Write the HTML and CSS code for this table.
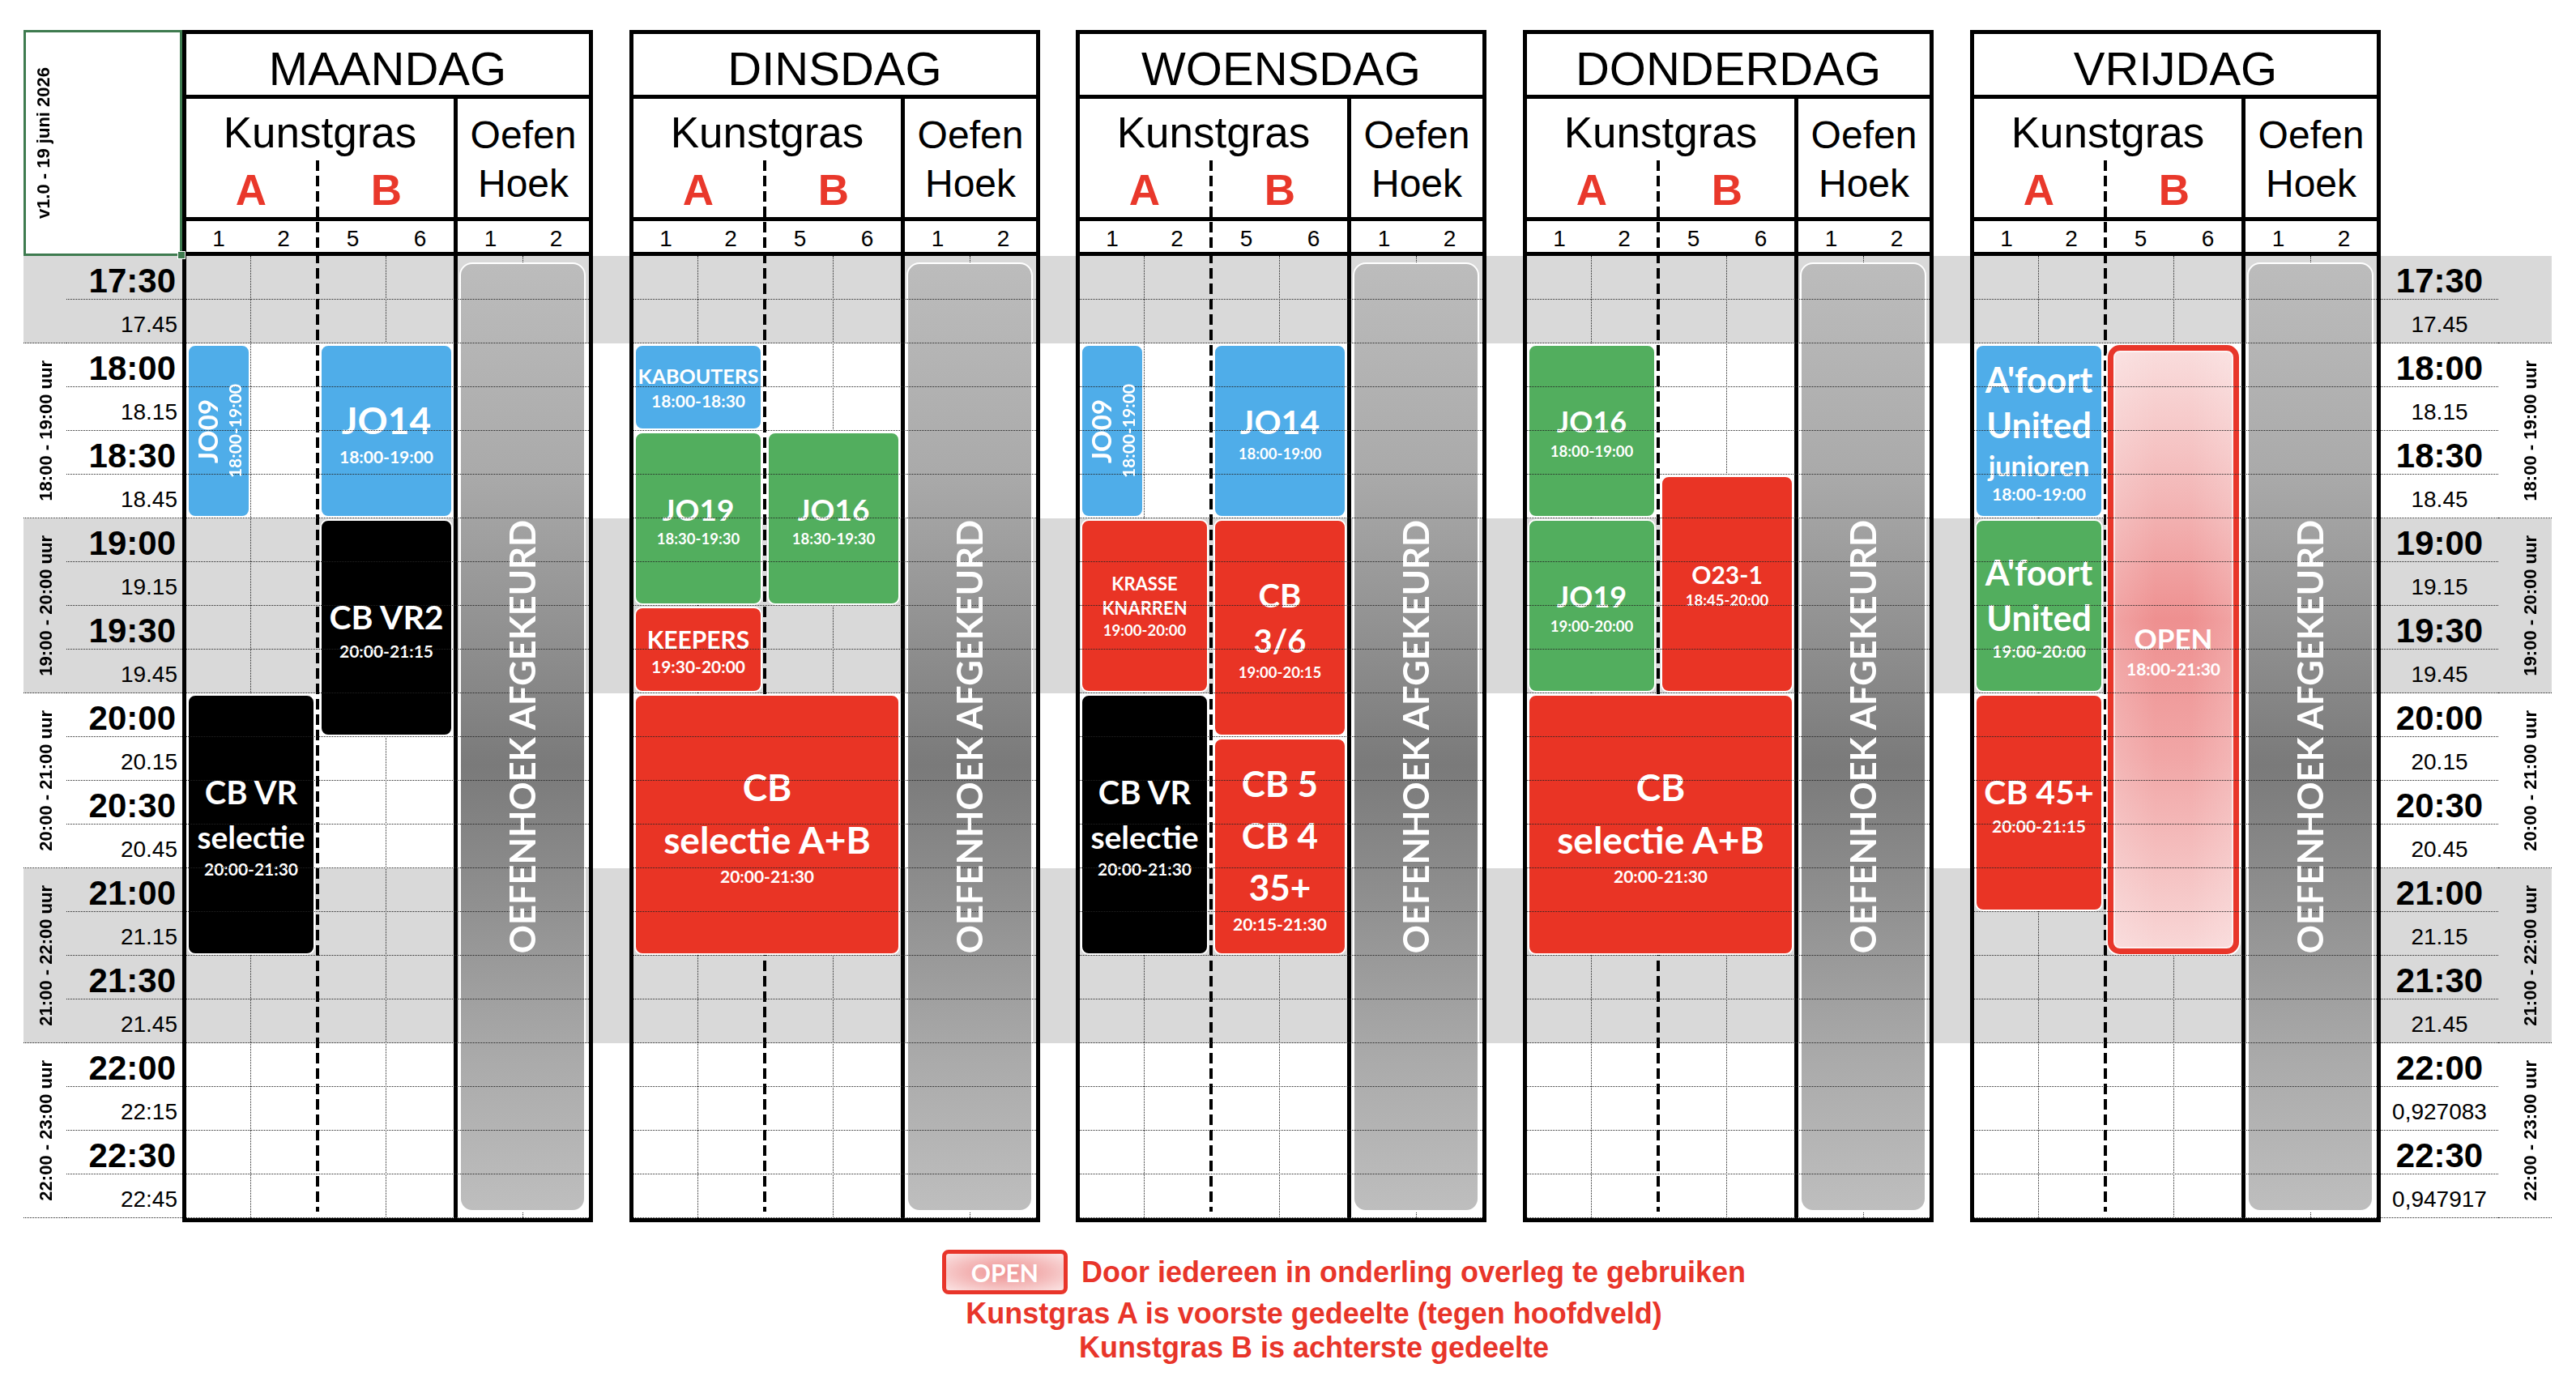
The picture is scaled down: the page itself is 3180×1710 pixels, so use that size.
FILE: index.html
```html
<!DOCTYPE html>
<html lang="nl">
<head>
<meta charset="utf-8">
<title>Trainingsschema</title>
<link rel="stylesheet" href="styles.css">
</head>
<body>
<div class="sheet">
  <div class="band band-a"></div>
  <div class="band band-b"></div>
  <div class="band band-c"></div>

  <div class="version"><div class="vt">v1.0 - 19 juni 2026</div><span class="handle"></span></div>

  <div class="tcol tcol-l">
    <div class="groups">
      <div class="grp half"></div>
      <div class="grp"><div class="vt">18:00 - 19:00 uur</div></div>
      <div class="grp"><div class="vt">19:00 - 20:00 uur</div></div>
      <div class="grp"><div class="vt">20:00 - 21:00 uur</div></div>
      <div class="grp"><div class="vt">21:00 - 22:00 uur</div></div>
      <div class="grp"><div class="vt">22:00 - 23:00 uur</div></div>
    </div>
    <div class="labels">
      <div class="tl big">17:30</div><div class="tl">17.45</div>
      <div class="tl big">18:00</div><div class="tl">18.15</div>
      <div class="tl big">18:30</div><div class="tl">18.45</div>
      <div class="tl big">19:00</div><div class="tl">19.15</div>
      <div class="tl big">19:30</div><div class="tl">19.45</div>
      <div class="tl big">20:00</div><div class="tl">20.15</div>
      <div class="tl big">20:30</div><div class="tl">20.45</div>
      <div class="tl big">21:00</div><div class="tl">21.15</div>
      <div class="tl big">21:30</div><div class="tl">21.45</div>
      <div class="tl big">22:00</div><div class="tl">22:15</div>
      <div class="tl big">22:30</div><div class="tl">22:45</div>
    </div>
  </div>

  <!-- MAANDAG -->
  <div class="day d1">
    <div class="dname">MAANDAG</div>
    <div class="bar bar1"></div>
    <div class="kg"><div class="kg-t">Kunstgras</div><div class="ab"><span class="a">A</span><span class="b">B</span></div></div>
    <div class="oh">Oefen<br>Hoek</div>
    <div class="bar bar2"></div>
    <div class="num n1">1</div><div class="num n2">2</div><div class="num n5">5</div><div class="num n6">6</div><div class="num n7">1</div><div class="num n8">2</div>
    <div class="bar bar3"></div>
    <div class="hl"></div>
    <div class="vl vl1"></div><div class="vl vl2"></div><div class="vl vl3"></div>
    <div class="vdiv"></div>
    <div class="dash"></div>
    <div class="tile"><div class="vt">OEFENHOEK AFGEKEURD</div></div>
    <div class="s blue c1 t18-19 rot"><div class="vt"><div class="f33">JO09</div><div class="tm">18:00-19:00</div></div></div>
    <div class="s blue cB t18-19"><div class="f46">JO14</div><div class="tm">18:00-19:00</div></div>
    <div class="s black cB t19-2015"><div class="f41">CB VR2</div><div class="tm">20:00-21:15</div></div>
    <div class="s black cA t20-2130"><div class="f40">CB VR</div><div class="f39">selectie</div><div class="tm">20:00-21:30</div></div>
  </div>

  <!-- DINSDAG -->
  <div class="day d2">
    <div class="dname">DINSDAG</div>
    <div class="bar bar1"></div>
    <div class="kg"><div class="kg-t">Kunstgras</div><div class="ab"><span class="a">A</span><span class="b">B</span></div></div>
    <div class="oh">Oefen<br>Hoek</div>
    <div class="bar bar2"></div>
    <div class="num n1">1</div><div class="num n2">2</div><div class="num n5">5</div><div class="num n6">6</div><div class="num n7">1</div><div class="num n8">2</div>
    <div class="bar bar3"></div>
    <div class="hl"></div>
    <div class="vl vl1"></div><div class="vl vl2"></div><div class="vl vl3"></div>
    <div class="vdiv"></div>
    <div class="dash"></div>
    <div class="tile"><div class="vt">OEFENHOEK AFGEKEURD</div></div>
    <div class="s blue cA t18-1830"><div class="f25">KABOUTERS</div><div class="tm">18:00-18:30</div></div>
    <div class="s green cA t1830-1930"><div class="f37">JO19</div><div class="tms">18:30-19:30</div></div>
    <div class="s green cB t1830-1930"><div class="f37">JO16</div><div class="tms">18:30-19:30</div></div>
    <div class="s red cA t1930-20"><div class="f30">KEEPERS</div><div class="tm">19:30-20:00</div></div>
    <div class="s red cAB t20-2130"><div class="f46">CB</div><div class="f46">selectie A+B</div><div class="tm">20:00-21:30</div></div>
  </div>

  <!-- WOENSDAG -->
  <div class="day d3">
    <div class="dname">WOENSDAG</div>
    <div class="bar bar1"></div>
    <div class="kg"><div class="kg-t">Kunstgras</div><div class="ab"><span class="a">A</span><span class="b">B</span></div></div>
    <div class="oh">Oefen<br>Hoek</div>
    <div class="bar bar2"></div>
    <div class="num n1">1</div><div class="num n2">2</div><div class="num n5">5</div><div class="num n6">6</div><div class="num n7">1</div><div class="num n8">2</div>
    <div class="bar bar3"></div>
    <div class="hl"></div>
    <div class="vl vl1"></div><div class="vl vl2"></div><div class="vl vl3"></div>
    <div class="vdiv"></div>
    <div class="dash"></div>
    <div class="tile"><div class="vt">OEFENHOEK AFGEKEURD</div></div>
    <div class="s blue c1 t18-19 rot"><div class="vt"><div class="f33">JO09</div><div class="tm">18:00-19:00</div></div></div>
    <div class="s blue cB t18-19"><div class="f41">JO14</div><div class="tms">18:00-19:00</div></div>
    <div class="s red cA t19-20"><div class="f22">KRASSE</div><div class="f22">KNARREN</div><div class="tms">19:00-20:00</div></div>
    <div class="s red cB t19-2015"><div class="f40">CB</div><div class="f40">3/6</div><div class="tms">19:00-20:15</div></div>
    <div class="s black cA t20-2130"><div class="f40">CB VR</div><div class="f39">selectie</div><div class="tm">20:00-21:30</div></div>
    <div class="s red cB t2015-2130"><div class="f44">CB 5</div><div class="f44">CB 4</div><div class="f44">35+</div><div class="tm">20:15-21:30</div></div>
  </div>

  <!-- DONDERDAG -->
  <div class="day d4">
    <div class="dname">DONDERDAG</div>
    <div class="bar bar1"></div>
    <div class="kg"><div class="kg-t">Kunstgras</div><div class="ab"><span class="a">A</span><span class="b">B</span></div></div>
    <div class="oh">Oefen<br>Hoek</div>
    <div class="bar bar2"></div>
    <div class="num n1">1</div><div class="num n2">2</div><div class="num n5">5</div><div class="num n6">6</div><div class="num n7">1</div><div class="num n8">2</div>
    <div class="bar bar3"></div>
    <div class="hl"></div>
    <div class="vl vl1"></div><div class="vl vl2"></div><div class="vl vl3"></div>
    <div class="vdiv"></div>
    <div class="dash"></div>
    <div class="tile"><div class="vt">OEFENHOEK AFGEKEURD</div></div>
    <div class="s green cA t18-19"><div class="f36">JO16</div><div class="tms">18:00-19:00</div></div>
    <div class="s green cA t19-20"><div class="f36">JO19</div><div class="tms">19:00-20:00</div></div>
    <div class="s red cB t1845-20"><div class="f30">O23-1</div><div class="tms">18:45-20:00</div></div>
    <div class="s red cAB t20-2130"><div class="f46">CB</div><div class="f46">selectie A+B</div><div class="tm">20:00-21:30</div></div>
  </div>

  <!-- VRIJDAG -->
  <div class="day d5">
    <div class="dname">VRIJDAG</div>
    <div class="bar bar1"></div>
    <div class="kg"><div class="kg-t">Kunstgras</div><div class="ab"><span class="a">A</span><span class="b">B</span></div></div>
    <div class="oh">Oefen<br>Hoek</div>
    <div class="bar bar2"></div>
    <div class="num n1">1</div><div class="num n2">2</div><div class="num n5">5</div><div class="num n6">6</div><div class="num n7">1</div><div class="num n8">2</div>
    <div class="bar bar3"></div>
    <div class="hl"></div>
    <div class="vl vl1"></div><div class="vl vl2"></div><div class="vl vl3"></div>
    <div class="vdiv"></div>
    <div class="dash"></div>
    <div class="tile"><div class="vt">OEFENHOEK AFGEKEURD</div></div>
    <div class="s blue cA t18-19 tight"><div class="f43">A'foort</div><div class="f43">United</div><div class="f34">junioren</div><div class="tm">18:00-19:00</div></div>
    <div class="s green cA t19-20 tight"><div class="f43">A'foort</div><div class="f43">United</div><div class="tm">19:00-20:00</div></div>
    <div class="s red cA t20-2115"><div class="f41">CB 45+</div><div class="tm">20:00-21:15</div></div>
    <div class="s open cB t18-2130"><div class="f35">OPEN</div><div class="tm">18:00-21:30</div></div>
  </div>

  <div class="tcol tcol-r">
    <div class="labels">
      <div class="tl big">17:30</div><div class="tl">17.45</div>
      <div class="tl big">18:00</div><div class="tl">18.15</div>
      <div class="tl big">18:30</div><div class="tl">18.45</div>
      <div class="tl big">19:00</div><div class="tl">19.15</div>
      <div class="tl big">19:30</div><div class="tl">19.45</div>
      <div class="tl big">20:00</div><div class="tl">20.15</div>
      <div class="tl big">20:30</div><div class="tl">20.45</div>
      <div class="tl big">21:00</div><div class="tl">21.15</div>
      <div class="tl big">21:30</div><div class="tl">21.45</div>
      <div class="tl big">22:00</div><div class="tl">0,927083</div>
      <div class="tl big">22:30</div><div class="tl">0,947917</div>
    </div>
    <div class="groups">
      <div class="grp half"></div>
      <div class="grp"><div class="vt">18:00 - 19:00 uur</div></div>
      <div class="grp"><div class="vt">19:00 - 20:00 uur</div></div>
      <div class="grp"><div class="vt">20:00 - 21:00 uur</div></div>
      <div class="grp"><div class="vt">21:00 - 22:00 uur</div></div>
      <div class="grp"><div class="vt">22:00 - 23:00 uur</div></div>
    </div>
  </div>
</div>

<div class="legend">
  <div class="leg1"><div class="openbox">OPEN</div><div>Door iedereen in onderling overleg te gebruiken</div></div>
  <div>Kunstgras A is voorste gedeelte (tegen hoofdveld)</div>
  <div>Kunstgras B is achterste gedeelte</div>
</div>
</body>
</html>
```

FILE: styles.css
```css
* { box-sizing: border-box; }
html, body { margin: 0; background: #fff; }
body {
  width: 3180px;
  height: 1710px;
  overflow: hidden;
  font-family: "Liberation Sans", Arial, sans-serif;
  color: #000;
}

.sheet {
  display: grid;
  padding: 37px 0 0 29px;
  grid-template-columns: 53px 143px 507px 45px 507px 44px 507px 45px 507px 45px 507px 145px 66px;
  grid-template-rows: 279px repeat(22, 54px) 5px;
}

.band { grid-column: 1 / -1; background: #d9d9d9; }
.band-a { grid-row: 2 / 4; }
.band-b { grid-row: 8 / 12; }
.band-c { grid-row: 16 / 20; }

.vt {
  writing-mode: vertical-rl;
  transform: rotate(180deg);
  white-space: nowrap;
}

/* version box */
.version {
  grid-column: 1 / 3;
  grid-row: 1;
  border: 3px solid #3e7b4f;
  background: #fff;
  position: relative;
  z-index: 2;
  display: flex;
  align-items: center;
  padding-left: 9px;
}
.version .vt { font-weight: 700; font-size: 22px; line-height: 26px; }
.handle {
  position: absolute;
  right: -7px;
  bottom: -7px;
  width: 10px;
  height: 10px;
  background: #3e7b4f;
  border: 1px solid #fff;
}

/* time columns */
.tcol { grid-row: 2 / 24; display: flex; }
.tcol-l { grid-column: 1 / 3; }
.tcol-r { grid-column: 12 / 14; }
.groups { display: flex; flex-direction: column; }
.tcol-l .groups { width: 53px; }
.tcol-r .groups { width: 66px; }
.grp {
  height: 216px;
  border-bottom: 1px dotted #222;
  display: flex;
  align-items: center;
  justify-content: center;
}
.grp.half { height: 108px; }
.tcol-l .grp { padding-left: 3px; }
.tcol-r .grp { padding-left: 14px; }
.grp .vt { font-weight: 700; font-size: 22px; line-height: 26px; }
.labels { display: flex; flex-direction: column; }
.tcol-l .labels { width: 143px; }
.tcol-r .labels { width: 145px; }
.tl {
  height: 54px;
  border-bottom: 1px dotted #222;
  padding-top: 8px;
  line-height: 45px;
  font-size: 28px;
  white-space: nowrap;
}
.tl.big { font-size: 42px; font-weight: 700; }
.tcol-l .tl { text-align: right; padding-right: 6px; }
.tcol-l .tl.big { padding-right: 8px; }
.tcol-r .tl { text-align: center; }

/* day blocks */
.day {
  grid-row: 1 / 25;
  border: 5px solid #000;
  display: grid;
  grid-template-columns: 80px 80px 4px 83px 83px 5px 81px 81px;
  grid-template-rows: 75px 5px 146px 5px 38px 5px repeat(22, 54px);
}
.d1 { grid-column: 3; }
.d2 { grid-column: 5; }
.d3 { grid-column: 7; }
.d4 { grid-column: 9; }
.d5 { grid-column: 11; }

.dname {
  grid-column: 1 / -1;
  grid-row: 1;
  text-align: center;
  font-size: 58px;
  line-height: 65px;
  padding-top: 10px;
  background: #fff;
}
.bar { grid-column: 1 / -1; background: #000; }
.bar1 { grid-row: 2; }
.bar2 { grid-row: 4; }
.bar3 { grid-row: 6; }

.kg {
  grid-column: 1 / 6;
  grid-row: 3;
  padding-top: 12px;
  text-align: center;
}
.kg-t { font-size: 53px; line-height: 60px; }
.ab {
  display: grid;
  grid-template-columns: 160px 4px 166px;
  margin-top: 11px;
  font-size: 53px;
  line-height: 60px;
  font-weight: 700;
  color: #e9382b;
}
.ab .a { grid-column: 1; }
.ab .b { grid-column: 3; }

.oh {
  grid-column: 7 / 9;
  grid-row: 3;
  text-align: center;
  font-size: 48px;
  line-height: 60px;
  padding-top: 15px;
}

.num {
  grid-row: 5;
  text-align: center;
  font-size: 28px;
  line-height: 32px;
  padding-top: 6px;
}
.n1 { grid-column: 1; }
.n2 { grid-column: 2; }
.n5 { grid-column: 4; }
.n6 { grid-column: 5; }
.n7 { grid-column: 7; }
.n8 { grid-column: 8; }

.hl {
  grid-column: 1 / -1;
  grid-row: 7 / 29;
  background: repeating-linear-gradient(to bottom, transparent 0 53px, #222 53px 54px);
  -webkit-mask-image: repeating-linear-gradient(to right, #000 0 1px, transparent 1px 2px);
  mask-image: repeating-linear-gradient(to right, #000 0 1px, transparent 1px 2px);
}
.vl { grid-row: 7 / 29; border-right: 1px dotted #222; }
.vl1 { grid-column: 1; }
.vl2 { grid-column: 4; }
.vl3 { grid-column: 7; }
.vdiv { grid-column: 6; grid-row: 3 / -1; background: #000; }
.dash {
  grid-column: 3;
  grid-row: 3 / -1;
  margin: 76px 0 8px;
  background: repeating-linear-gradient(to bottom, #000 0 13px, transparent 13px 19px);
}

.tile {
  grid-column: 7 / 9;
  grid-row: 7 / 29;
  margin: 8px 4px 8px 2px;
  border: 2px solid #fff;
  border-radius: 16px;
  background: linear-gradient(180deg, #bcbcbc 0%, #aaaaaa 22%, #8f8f8f 40%, #7a7a7a 53%, #8f8f8f 67%, #aaaaaa 84%, #bebebe 100%);
  display: flex;
  align-items: center;
  justify-content: center;
  color: #fff;
  font-family: Lato, "Open Sans", sans-serif;
  font-weight: 700;
  font-size: 43.5px;
}
.tile .vt { line-height: 1; }

/* sessions */
.s {
  margin: 1px;
  border: 2px solid #fff;
  border-radius: 10px;
  display: flex;
  flex-direction: column;
  align-items: center;
  justify-content: center;
  text-align: center;
  color: #fff;
  font-family: Lato, "Open Sans", sans-serif;
  font-weight: 700;
  line-height: 1.4;
  white-space: nowrap;
}
.s.rot { flex-direction: row; }
.s.rot .vt { line-height: 1.2; }
.s.tight { line-height: 1.3; }
.blue { background: #4fade9; }
.green { background: #52ae5e; }
.red { background: #e93425; }
.black { background: #000; }
.open {
  margin: 2px 3px 2px 1px;
  border: 7px solid #e8362a;
  border-radius: 15px;
  box-shadow: 0 0 0 2px #fff, inset 0 0 0 2px rgba(255, 255, 255, 0.6);
  background:
    linear-gradient(to right, rgba(255, 255, 255, 0.18), rgba(255, 255, 255, 0) 35%, rgba(255, 255, 255, 0) 65%, rgba(255, 255, 255, 0.18)),
    linear-gradient(to bottom, #f9dcdc 0%, #f3b6b6 25%, #ee9090 45%, #f1a6a6 68%, #f8d6d6 100%);
}

.c1 { grid-column: 1 / 2; }
.cA { grid-column: 1 / 3; }
.cB { grid-column: 4 / 6; }
.cAB { grid-column: 1 / 6; }

.t18-19 { grid-row: 9 / 13; }
.t18-1830 { grid-row: 9 / 11; }
.t1830-1930 { grid-row: 11 / 15; }
.t1930-20 { grid-row: 15 / 17; }
.t19-20 { grid-row: 13 / 17; }
.t19-2015 { grid-row: 13 / 18; }
.t1845-20 { grid-row: 12 / 17; }
.t20-2130 { grid-row: 17 / 23; }
.t20-2115 { grid-row: 17 / 22; }
.t2015-2130 { grid-row: 18 / 23; }
.t18-2130 { grid-row: 9 / 23; }

.f22 { font-size: 22px; }
.f25 { font-size: 25px; }
.f30 { font-size: 30px; }
.f33 { font-size: 33px; }
.f34 { font-size: 34px; }
.f35 { font-size: 35px; }
.f36 { font-size: 36px; }
.f37 { font-size: 37px; }
.f39 { font-size: 39px; }
.f40 { font-size: 40px; }
.f41 { font-size: 41px; }
.f43 { font-size: 43px; }
.f44 { font-size: 44px; }
.f46 { font-size: 46px; }
.tm { font-size: 21px; line-height: 1.25; }
.tms { font-size: 18.5px; line-height: 1.25; }
.s .f44 { line-height: 1.45; }

/* legend */
.legend {
  display: flex;
  flex-direction: column;
  align-items: center;
  margin-top: 34px;
  padding-left: 64px;
  color: #e8352a;
  font-weight: 700;
  font-size: 36px;
  line-height: 42px;
  white-space: nowrap;
}
.leg1 {
  display: flex;
  align-items: center;
  height: 55px;
  margin-left: 74px;
  margin-bottom: 3px;
}
.openbox {
  width: 155px;
  height: 55px;
  margin-right: 17px;
  border: 5px solid #e8352a;
  border-radius: 8px;
  background: radial-gradient(ellipse at center, #ee9090 0%, #f4bcbc 55%, #fbe4e4 100%);
  color: #fff;
  font-family: Lato, "Open Sans", sans-serif;
  font-size: 30px;
  line-height: 1;
  display: flex;
  align-items: center;
  justify-content: center;
}
```
